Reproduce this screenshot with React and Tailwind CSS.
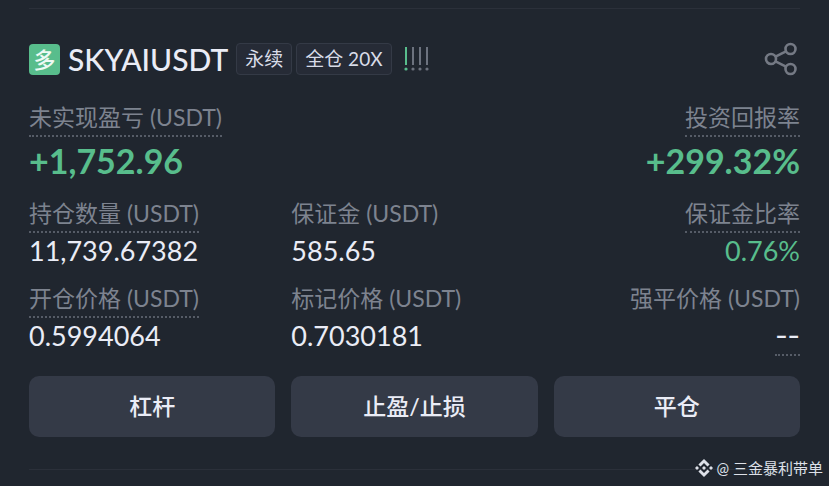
import React from 'react';

const stats = [
  { label: '持仓数量 (USDT)', value: '11,739.67382', hint: true },
  { label: '保证金 (USDT)', value: '585.65' },
  { label: '保证金比率', value: '0.76%', hint: true, align: 'right', color: 'green' },
  { label: '开仓价格 (USDT)', value: '0.5994064', hint: true },
  { label: '标记价格 (USDT)', value: '0.7030181' },
  { label: '强平价格 (USDT)', value: '--', align: 'right', empty: true },
];

const actions = ['杠杆', '止盈/止损', '平仓'];

const Label = ({ children, hint }) => (
  <span
    className={`h-9 border-b-2 border-dotted text-[23px] leading-8 whitespace-nowrap text-[#7d838f] ${
      hint ? 'border-[#565c67]' : 'border-transparent'
    }`}
  >
    {children}
  </span>
);

const Stat = ({ label, value, hint, empty, align, color }) => (
  <div className={`flex flex-col ${align === 'right' ? 'items-end' : 'items-start'}`}>
    <Label hint={hint}>{label}</Label>
    <span
      className={`border-b-2 border-dotted text-[27px] leading-9 ${
        color === 'green' ? 'text-[#58bd8c]' : 'text-[#eaecf6]'
      } ${empty ? 'border-[#565c67] font-[Inter,sans-serif]' : 'border-transparent'}`}
    >
      {value}
    </span>
  </div>
);

const Tag = ({ children }) => (
  <span className="flex h-8 items-center rounded-sm border border-[#343a46] bg-[#262b36] px-2 text-[19px] whitespace-nowrap text-[#d8dce8]">
    {children}
  </span>
);

// 风险等级，第一格亮起
const RiskLevel = () => (
  <svg width="26" height="26" viewBox="0 0 26 26" className="ml-2">
    {[1, 8, 15, 22].map((x, i) => (
      <g key={x} fill={i === 0 ? '#58bd8c' : '#6c727e'}>
        <rect x={x} y="1" width="2" height="18" />
        <circle cx={x + 1} cy="23" r="1.6" />
      </g>
    ))}
  </svg>
);

const ShareIcon = () => (
  <svg width="36" height="36" viewBox="0 0 36 36" fill="none" stroke="#747984" strokeWidth="2.6">
    <circle cx="7" cy="18" r="5" />
    <circle cx="26.500" cy="8" r="5" />
    <circle cx="26.500" cy="28" r="5" />
    <path d="M11.500 15.700L22 10.300M11.500 20.300L22 25.700" />
  </svg>
);

const BrandIcon = () => (
  <svg width="18" height="18" viewBox="0 0 18 18" fill="#dde0e8">
    <path d="M5.500 7.600L9 4.100L12.500 7.600L14.600 5.500L9 0L3.400 5.500Z" />
    <path d="M5.500 10.400L9 13.900L12.500 10.400L14.600 12.500L9 18L3.400 12.500Z" />
    <path d="M0 9L2 7L4 9L2 11ZM14 9L16 7L18 9L16 11ZM7 9L9 7L11 9L9 11Z" />
  </svg>
);

export default function App() {
  return (
    <div className="relative min-h-screen bg-[#20262f] px-[29px] pt-2 font-[Lato,'Noto_Sans_CJK_SC',sans-serif]">
      <div className="border-y border-[#2b303a] pt-8 pb-8">
        <header className="flex h-9 items-center justify-between">
          <div className="flex items-center gap-1">
            <span className="mr-1 flex size-[31px] items-center justify-center rounded-sm bg-[#58bd8c] text-[22px] font-medium text-[#eefaf4]">
              多
            </span>
            <h1 className="mr-1 text-[30px] leading-9 font-medium text-[#eaecf6]">SKYAIUSDT</h1>
            <Tag>永续</Tag>
            <Tag>全仓 20X</Tag>
            <RiskLevel />
          </div>
          <button type="button" aria-label="分享">
            <ShareIcon />
          </button>
        </header>

        <section className="mt-6 flex justify-between">
          <div className="flex flex-col items-start">
            <Label hint>未实现盈亏 (USDT)</Label>
            <strong className="text-[34px] leading-[48px] font-bold text-[#58bd8c]">+1,752.96</strong>
          </div>
          <div className="flex flex-col items-end">
            <Label hint>投资回报率</Label>
            <strong className="text-[34px] leading-[48px] font-bold text-[#58bd8c]">+299.32%</strong>
          </div>
        </section>

        <section className="mt-3 grid grid-cols-3 gap-x-4 gap-y-[11px]">
          {stats.map((item) => (
            <Stat key={item.label} {...item} />
          ))}
        </section>

        <div className="mt-5 grid grid-cols-3 gap-4">
          {actions.map((text) => (
            <button
              key={text}
              type="button"
              className="h-[61px] rounded-[10px] bg-[#343a47] text-[23px] font-medium text-[#eaecf6]"
            >
              {text}
            </button>
          ))}
        </div>
      </div>

      {/* 作者水印 */}
      <div className="absolute right-[6px] bottom-2 flex items-center gap-1 text-[15px] leading-5 text-[#dde0e8]">
        <BrandIcon />
        <span>@ 三金暴利带单</span>
      </div>
    </div>
  );
}
